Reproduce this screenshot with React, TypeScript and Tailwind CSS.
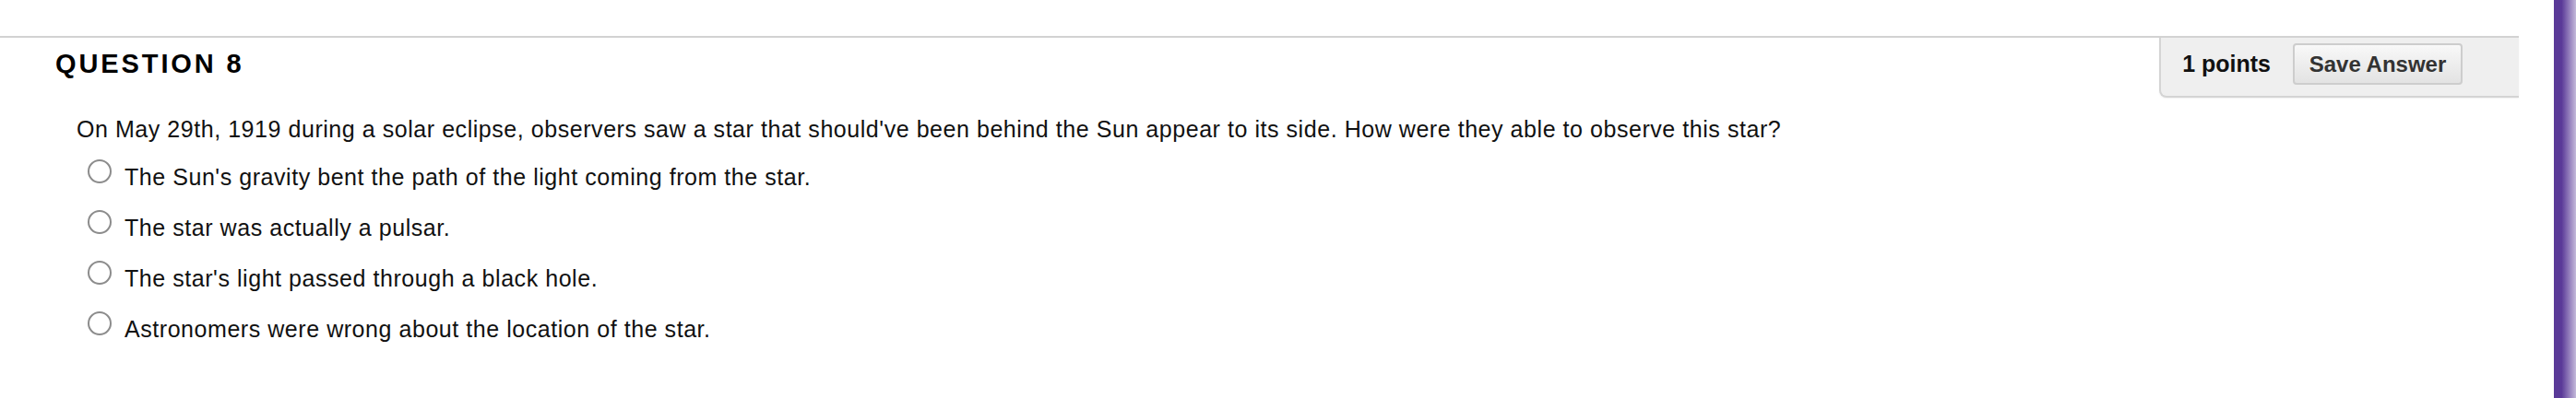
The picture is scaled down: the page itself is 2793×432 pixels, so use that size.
const options = [
  "The Sun's gravity bent the path of the light coming from the star.",
  'The star was actually a pulsar.',
  "The star's light passed through a black hole.",
  'Astronomers were wrong about the location of the star.',
];

function Radio() {
  return (
    <span className="block h-[26px] w-[26px] shrink-0 rounded-full border-2 border-[#8c8c8c] bg-white" />
  );
}

export default function App() {
  return (
    <div className="flex h-[432px] w-[2793px] overflow-hidden bg-white font-['Liberation_Sans',Arial,sans-serif] text-[#111]">
      <main className="w-[2731px] shrink-0 pt-[39px]">
        <div className="border-t-2 border-[#d2d2d2]">
          {/* Question header + points panel */}
          <div className="flex items-start justify-between">
            <h2 className="pl-[60px] pt-[14px] text-[29px] font-bold uppercase leading-[29px] tracking-[0.1em] text-black">
              Question 8
            </h2>
            <div className="flex items-center rounded-bl-[8px] border-b-2 border-l-2 border-[#d4d4d4] bg-[#efefef] pb-[12px] pl-[23px] pr-[61px] pt-[6px] shadow-[0_1px_2px_rgba(0,0,0,0.06)]">
              <span className="text-[25px] font-bold leading-[25px] text-[#111]">1 points</span>
              <button className="ml-[24px] h-[45px] w-[184px] rounded-[4px] border-2 border-[#cdcdcd] bg-[linear-gradient(to_bottom,#f8f8f8,#e3e3e3)] text-[24px] font-bold leading-[24px] text-[#333]">
                Save Answer
              </button>
            </div>
          </div>

          {/* Question body */}
          <div className="pl-[83px] pt-[15px]">
            <p className="text-[25px] leading-[38px] tracking-[0.55px]">
              On May 29th, 1919 during a solar eclipse, observers saw a star that should&apos;ve been behind the Sun appear to its side. How were they able to observe this star?
            </p>
            <ul className="mt-[14px] flex flex-col gap-[17px] pl-[12px]">
              {options.map((o) => (
                <li key={o} className="flex items-start gap-[14px]">
                  <Radio />
                  <span className="text-[25px] leading-[38px] tracking-[0.55px]">{o}</span>
                </li>
              ))}
            </ul>
          </div>
        </div>
      </main>
      <div className="ml-auto h-[432px] w-[24px] shrink-0 bg-[linear-gradient(to_right,#5a3a98_35%,#c4b9da)]" />
    </div>
  );
}
